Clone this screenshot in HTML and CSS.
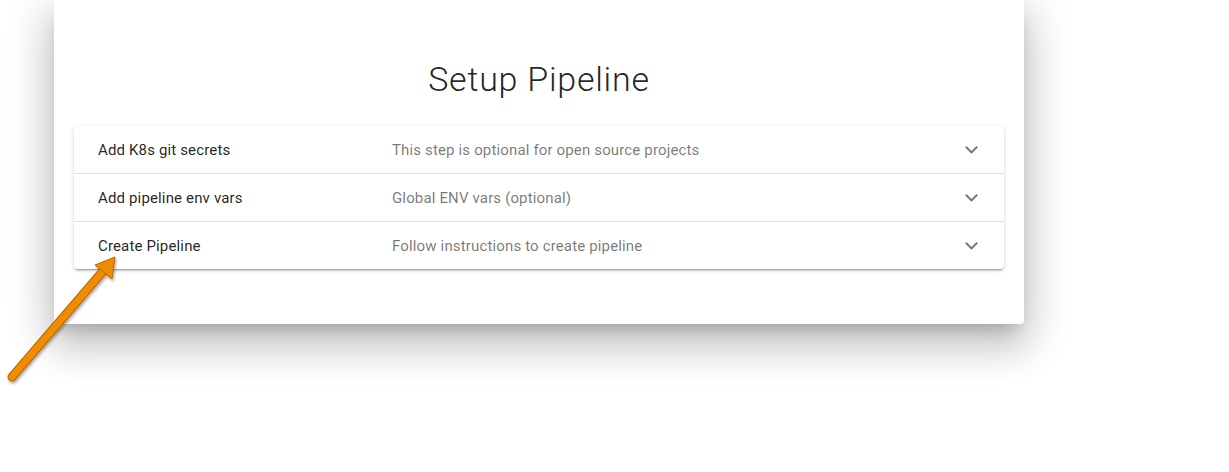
FILE: index.html
```html
<!DOCTYPE html>
<html>
<head>
<meta charset="utf-8">
<link rel="stylesheet" href="styles.css">
</head>
<body>
<div class="page">
  <div class="card">
    <h1 class="title">Setup Pipeline</h1>
    <div class="accordion">
      <div class="panel">
        <span class="p-title">Add K8s git secrets</span>
        <span class="p-desc">This step is optional for open source projects</span>
        <span class="chev"></span>
      </div>
      <div class="panel">
        <span class="p-title">Add pipeline env vars</span>
        <span class="p-desc">Global ENV vars (optional)</span>
        <span class="chev"></span>
      </div>
      <div class="panel">
        <span class="p-title">Create Pipeline</span>
        <span class="p-desc">Follow instructions to create pipeline</span>
        <span class="chev"></span>
      </div>
    </div>
  </div>
  <svg class="arrow" width="140" height="400" viewBox="0 0 140 400">
    <defs>
      <filter id="sh" x="-20%" y="-20%" width="140%" height="140%">
        <feDropShadow dx="1" dy="2" stdDeviation="1.5" flood-color="#000" flood-opacity="0.35"/>
      </filter>
    </defs>
    <g filter="url(#sh)">
      <line x1="12" y1="377" x2="104" y2="270" stroke="#b86400" stroke-width="9" stroke-linecap="round"/>
      <line x1="12" y1="377" x2="104" y2="270" stroke="#f08c00" stroke-width="7" stroke-linecap="round"/>
      <polygon points="115,257 95,265 112,279" fill="#f08c00" stroke="#b86400" stroke-width="1" stroke-linejoin="round"/>
    </g>
  </svg>
</div>
</body>
</html>
```

FILE: styles.css
```css
html, body {
  margin: 0;
  padding: 0;
  background: #ffffff;
}
body {
  font-family: Roboto, "Liberation Sans", sans-serif;
  width: 1229px;
  height: 472px;
  overflow: hidden;
}
.page {
  position: relative;
  width: 1229px;
  height: 472px;
}
.card {
  margin-left: 54px;
  width: 970px;
  height: 324px;
  box-sizing: border-box;
  padding: 0 20px;
  background: #fff;
  border-radius: 0 0 4px 4px;
  box-shadow: 0 11px 15px -7px rgba(0,0,0,0.2), 0 24px 38px 3px rgba(0,0,0,0.14), 0 9px 46px 8px rgba(0,0,0,0.12);
  display: flex;
  flex-direction: column;
}
.title {
  margin: 0;
  padding-top: 59px;
  height: 126px;
  box-sizing: border-box;
  text-align: center;
  font-size: 34px;
  line-height: 40px;
  font-weight: 300;
  color: rgba(0,0,0,0.87);
  letter-spacing: 0.75px;
}
.accordion {
  border-radius: 4px;
  box-shadow: 0 3px 1px -2px rgba(0,0,0,0.2), 0 2px 2px 0 rgba(0,0,0,0.14), 0 1px 5px 0 rgba(0,0,0,0.12);
  background: #fff;
}
.panel {
  height: 48px;
  display: flex;
  align-items: center;
  padding: 0 24px;
  font-size: 15px;
  letter-spacing: 0.15px;
  border-top: 1px solid rgba(0,0,0,0.12);
  box-sizing: border-box;
}
.panel:first-child {
  border-top: none;
  height: 47px;
}
.p-title {
  width: 294px;
  flex: none;
  color: rgba(0,0,0,0.87);
}
.p-desc {
  flex: 1;
  color: rgba(0,0,0,0.54);
}
.chev {
  width: 7px;
  height: 7px;
  border-right: 2px solid rgba(0,0,0,0.54);
  border-bottom: 2px solid rgba(0,0,0,0.54);
  transform: rotate(45deg);
  margin-right: 4px;
  margin-top: -5px;
}
.arrow {
  position: absolute;
  left: 0;
  top: 0;
}
```
